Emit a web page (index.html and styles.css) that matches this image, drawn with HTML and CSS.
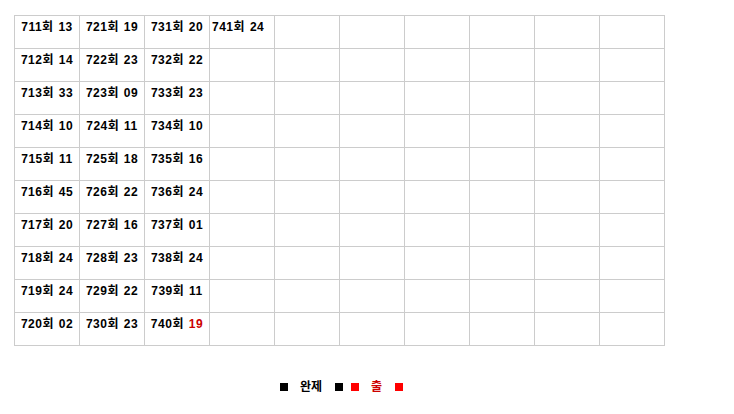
FILE: index.html
```html
<!DOCTYPE html>
<html lang="ko">
<head>
<meta charset="utf-8">
<link rel="stylesheet" href="styles.css">
</head>
<body>
<div class="wrap">
<table class="grid">
<tr><td>711회 13</td><td>721회 19</td><td>731회 20</td><td class="tight">741회 24</td><td></td><td></td><td></td><td></td><td></td><td></td></tr>
<tr><td>712회 14</td><td>722회 23</td><td>732회 22</td><td></td><td></td><td></td><td></td><td></td><td></td><td></td></tr>
<tr><td>713회 33</td><td>723회 09</td><td>733회 23</td><td></td><td></td><td></td><td></td><td></td><td></td><td></td></tr>
<tr><td>714회 10</td><td>724회 11</td><td>734회 10</td><td></td><td></td><td></td><td></td><td></td><td></td><td></td></tr>
<tr><td>715회 11</td><td>725회 18</td><td>735회 16</td><td></td><td></td><td></td><td></td><td></td><td></td><td></td></tr>
<tr><td>716회 45</td><td>726회 22</td><td>736회 24</td><td></td><td></td><td></td><td></td><td></td><td></td><td></td></tr>
<tr><td>717회 20</td><td>727회 16</td><td>737회 01</td><td></td><td></td><td></td><td></td><td></td><td></td><td></td></tr>
<tr><td>718회 24</td><td>728회 23</td><td>738회 24</td><td></td><td></td><td></td><td></td><td></td><td></td><td></td></tr>
<tr><td>719회 24</td><td>729회 22</td><td>739회 11</td><td></td><td></td><td></td><td></td><td></td><td></td><td></td></tr>
<tr><td>720회 02</td><td>730회 23</td><td>740회 <span class="hit">19</span></td><td></td><td></td><td></td><td></td><td></td><td></td><td></td></tr>
</table>
<div class="legend">
<span class="sq black"></span><span class="label">완제</span><span class="sq black gap-s"></span><span class="sq red"></span><span class="label red-text">출</span><span class="sq red"></span>
</div>
</div>
</body>
</html>
```
FILE: styles.css
```css
html, body {
  margin: 0;
  padding: 0;
  background: #fff;
}
body {
  font-family: "Liberation Sans", "Noto Sans CJK KR", sans-serif;
  font-size: 12px;
  font-weight: bold;
  color: #000;
}
.wrap {
  padding: 15px 0 0 14px;
  width: 651px;
}
.grid {
  border-collapse: collapse;
  table-layout: fixed;
  width: 651px;
}
.grid td {
  border: 1px solid #cccccc;
  width: 64px;
  height: 33px;
  padding: 4px 0 0 0;
  box-sizing: border-box;
  vertical-align: top;
  text-align: center;
  white-space: nowrap;
  line-height: 14px;
  letter-spacing: 0.5px;
  word-spacing: 1px;
  overflow: hidden;
}
.grid td.tight {
  text-align: left;
  padding-left: 2px;
}
.hit {
  color: #cc0000;
}
.legend {
  display: flex;
  align-items: center;
  justify-content: center;
  margin-top: 36px;
  padding-left: 4px;
  height: 10px;
  line-height: 10px;
}
.sq {
  display: inline-block;
  width: 8px;
  height: 8px;
}
.black { background: #000; }
.red { background: #ff0000; }
.label {
  margin: 0 13px 0 12px;
}
.gap-s { margin-right: 8px; }
.red-text { color: #cc0000; }
```
